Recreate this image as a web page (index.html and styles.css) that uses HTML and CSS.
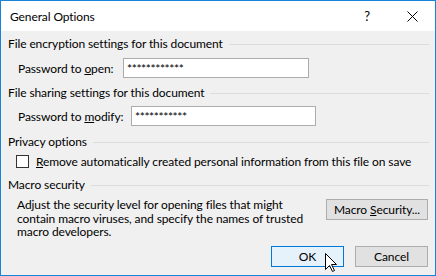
FILE: index.html
```html
<!DOCTYPE html>
<html>
<head>
<meta charset="utf-8">
<link rel="stylesheet" href="styles.css">
</head>
<body>
<div class="window">
  <div class="titlebar">
    <span class="title">General Options</span>
    <span class="help">?</span>
    <svg class="close" width="11" height="11" viewBox="0 0 11 11"><path d="M0.5 0.5 L10.5 10.5 M10.5 0.5 L0.5 10.5" stroke="#000" stroke-width="1" fill="none"/></svg>
  </div>
  <div class="content">
    <div class="group-head g1"><span>File encryption settings for this document</span></div>
    <div class="field-row r1">
      <span class="label l1">Password to <u>o</u>pen:</span>
      <div class="input in1">************</div>
    </div>
    <div class="group-head g2"><span>File sharing settings for this document</span></div>
    <div class="field-row r2">
      <span class="label l2">Password to <u>m</u>odify:</span>
      <div class="input in2">***********</div>
    </div>
    <div class="group-head g3"><span>Privacy options</span></div>
    <div class="check-row">
      <span class="checkbox"></span>
      <span class="check-label"><u>R</u>emove automatically created personal information from this file on save</span>
    </div>
    <div class="group-head g4"><span>Macro security</span></div>
    <div class="macro-row">
      <p class="macro-text">Adjust the security level for opening files that might<br>contain macro viruses, and specify the names of trusted<br>macro developers.</p>
      <div class="btn macro-btn"><span>Macro <u>S</u>ecurity...</span></div>
    </div>
    <div class="buttons">
      <div class="btn ok"><span>OK</span></div>
      <div class="btn cancel"><span>Cancel</span></div>
    </div>
  </div>
  <svg class="cursor" width="13" height="20" viewBox="0 0 13 20"><path d="M0.5 0.5 L0.5 16.5 L4.5 12.5 L7.5 18.5 L9.5 17.5 L6.5 11.5 L11.5 11.5 Z" fill="#fff" stroke="#000" stroke-width="1" stroke-linejoin="miter"/></svg>
</div>
</body>
</html>
```
FILE: styles.css
```css
html, body {
  margin: 0;
  padding: 0;
}
body {
  font-family: Lato, "Noto Sans", sans-serif;
  font-size: 12px;
  color: #000;
  letter-spacing: -0.1px;
}
.window {
  position: relative;
  width: 436px;
  height: 276px;
  box-sizing: border-box;
  border: 1px solid #1883d7;
  background: #f0f0f0;
  display: flex;
  flex-direction: column;
}
.titlebar {
  height: 30px;
  background: #fff;
  display: flex;
  align-items: center;
  padding-left: 9px;
}
.title {
  flex: 1;
}
.help {
  font-size: 13px;
  margin-right: 37px;
}
.close {
  margin-right: 17px;
}
.content {
  flex: 1;
  display: flex;
  flex-direction: column;
  padding: 0 7px 8px 7px;
  white-space: nowrap;
}
.group-head {
  display: flex;
  align-items: center;
  height: 16px;
  line-height: 16px;
}
.group-head::after {
  content: "";
  flex: 1;
  height: 1px;
  background: #dcdcdc;
  margin-left: 6px;
  margin-right: -1px;
}
.g1 { margin-top: 5px; }
.g2 { margin-top: 7px; }
.g3 { margin-top: 8px; }
.g4 { margin-top: 8px; }
.field-row {
  display: flex;
  align-items: center;
  padding-left: 10px;
  margin-top: 6px;
  height: 20px;
}
.r2 { margin-top: 5px; }
.label {
  flex: none;
}
.l1 { width: 105px; }
.l2 { width: 113px; }
.input {
  box-sizing: border-box;
  height: 20px;
  border: 1px solid #acacac;
  background: #fff;
  padding-left: 3px;
  line-height: 20px;
  font-size: 12px;
  letter-spacing: -0.4px;
}
.in1 { width: 186px; }
.in2 { width: 185px; }
.check-row {
  display: flex;
  align-items: center;
  height: 16px;
  margin-top: 3px;
  padding-left: 8px;
}
.checkbox {
  flex: none;
  width: 13px;
  height: 13px;
  box-sizing: border-box;
  border: 1px solid #333;
  background: #fff;
  margin-right: 7px;
}
.macro-row {
  display: flex;
  align-items: flex-start;
  justify-content: space-between;
  margin-top: 5px;
}
.macro-text {
  margin: 0 0 0 9px;
  line-height: 13.5px;
}
.btn {
  box-sizing: border-box;
  height: 21px;
  border: 1px solid #adadad;
  background: #e1e1e1;
  display: flex;
  align-items: center;
  justify-content: center;
}
.macro-btn {
  width: 102px;
  margin-top: 1px;
}
.buttons {
  margin-top: auto;
  display: flex;
  justify-content: flex-end;
  gap: 11px;
}
.ok {
  width: 73px;
  border-color: #0078d7;
  background: #e5f1fb;
}
.cancel {
  width: 73px;
}
.cursor {
  position: absolute;
  left: 324px;
  top: 252px;
}
```
